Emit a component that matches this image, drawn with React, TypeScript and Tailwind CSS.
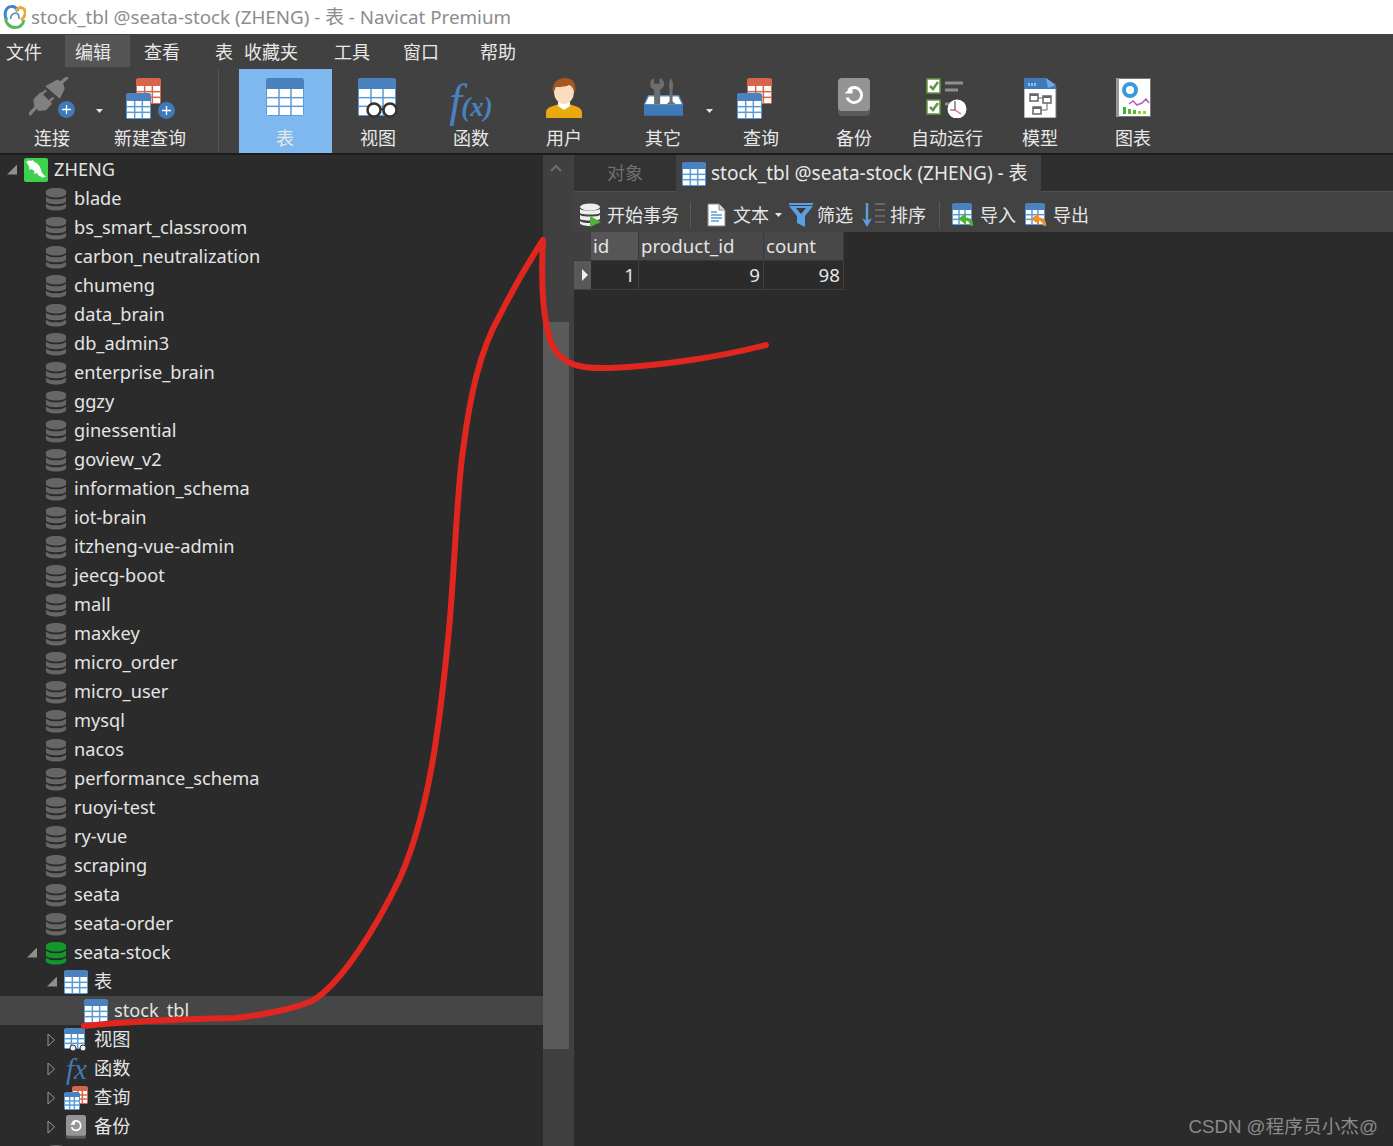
import React from 'react';

const uiFont = "font-['Noto_Sans','Noto_Sans_CJK_SC',sans-serif]";

function GridIcon({ w = 24, h = 24, head = '#4a82c0', line = '#5b9bd5', cols = 3, rows = 3 }: { w?: number; h?: number; head?: string; line?: string; cols?: number; rows?: number }) {
  const top = Math.round(h * 0.3);
  const cells = [];
  const cw = (w - 2) / cols;
  const ch = (h - top - 1) / rows;
  for (let c = 1; c < cols; c++) cells.push(<rect key={'c' + c} x={1 + c * cw - 0.75} y={top} width={1.5} height={h - top} fill={line} />);
  for (let r = 1; r < rows; r++) cells.push(<rect key={'r' + r} x={0} y={top + r * ch - 0.75} width={w} height={1.5} fill={line} />);
  return (
    <svg width={w} height={h} viewBox={`0 0 ${w} ${h}`}>
      <rect x={0.5} y={1} width={w - 1} height={h - 1.5} rx={1} fill="#fff" stroke={line} />
      {cells}
      <path d={`M0 ${top}V3a3 3 0 0 1 3-3H${w - 3}a3 3 0 0 1 3 3V${top}Z`} fill={head} />
    </svg>
  );
}

function DbIcon({ color = '#666666' }: { color?: string }) {
  return (
    <svg width={22} height={24} viewBox="0 0 24 24" preserveAspectRatio="none" className="ml-px">
      <path d="M1 4.500C1 2.500 6 1 12 1s11 1.500 11 3.500V7c0 2-5 3.500-11 3.500S1 9 1 7Z" fill={color} />
      <path d="M1 9.500c2 2 6 2.800 11 2.800s9-.8 11-2.800V14c0 2-5 3.300-11 3.300S1 16 1 14Z" fill={color} />
      <path d="M1 16.500c2 2 6 2.800 11 2.800s9-.8 11-2.800V20c0 2-5 3.500-11 3.500S1 22 1 20Z" fill={color} />
    </svg>
  );
}

function PlusBadge({ size = 17 }: { size?: number }) {
  return (
    <svg width={size} height={size} viewBox="0 0 17 17">
      <circle cx={8.5} cy={8.5} r={8.5} fill="#3f7ab8" />
      <path d="M8.500 4v9M4 8.500h9" stroke="#fff" strokeWidth={1.300} />
    </svg>
  );
}

function PlugIcon() {
  return (
    <span className="relative block w-[46px] h-[40px] -mt-px">
      <svg width={40} height={40} viewBox="30 20 120 120">
        <path d="M82 48L115 30L130 38L135 55L122 82Z" fill="#808080" stroke="#808080" strokeWidth={4} strokeLinejoin="round" />
        <path d="M128 36L143 23" stroke="#808080" strokeWidth={10} strokeLinecap="round" />
        <path d="M45 88L65 68L97 100L80 118L60 120L48 108Z" fill="#808080" stroke="#808080" strokeWidth={4} strokeLinejoin="round" />
        <path d="M66 72L82 60M88 95L104 82" stroke="#808080" strokeWidth={7} />
        <path d="M50 112L33 131" stroke="#808080" strokeWidth={10} strokeLinecap="round" />
      </svg>
      <span className="absolute right-0 bottom-[-1px]"><PlusBadge /></span>
    </span>
  );
}

function QueryIcon({ badge = false }: { badge?: boolean }) {
  return (
    <span className="relative block w-[48px] h-[41px]">
      <span className="absolute left-[10px] top-0"><GridIcon w={25} h={26} head="#d6654a" line="#d6654a" /></span>
      <span className="absolute left-0 top-[15px]"><GridIcon w={25} h={26} /></span>
      {badge && <span className="absolute right-[-1px] bottom-0"><PlusBadge /></span>}
    </span>
  );
}

function ViewIcon() {
  return (
    <span className="relative block w-[40px] h-[40px]">
      <GridIcon w={38} h={38} />
      <svg className="absolute left-[8px] top-[24px]" width={32} height={16} viewBox="0 0 32 16">
        <circle cx={8} cy={8} r={6.500} fill="#fff" stroke="#333" strokeWidth={2.500} />
        <circle cx={24} cy={8} r={6.500} fill="#fff" stroke="#333" strokeWidth={2.500} />
        <path d="M14 7h4" stroke="#333" strokeWidth={2} />
      </svg>
    </span>
  );
}

function FxIcon() {
  return (
    <span className="flex items-end h-[44px] font-['Liberation_Serif',serif] italic text-[#4a82c0] leading-none">
      <span className="text-[46px] leading-[42px]">f</span>
      <span className="text-[27px] leading-[30px] font-bold -ml-[1px]">(x)</span>
    </span>
  );
}

function UserIcon() {
  return (
    <svg width={38} height={40} viewBox="0 0 38 40">
      <path d="M1 40v-5c0-4 3-6 7-7l6-2h10l6 2c4 1 7 3 7 7v5Z" fill="#e9a90f" />
      <path d="M13 24h12v4l-6 4-6-4Z" fill="#fff" />
      <ellipse cx={19} cy={14} rx={10} ry={12} fill="#fbdcbf" />
      <path d="M8 15C6 5 13 0 20 0c8 0 12 6 10 15-1-4-3-7-6-8-4 2-11 2-13 2-1 2-2 4-3 6Z" fill="#a6561f" />
    </svg>
  );
}

function ToolsIcon() {
  return (
    <svg width={39} height={38} viewBox="42 25 116 113">
      <path d="M55 78H145L158 106H42Z" fill="#fff" stroke="#4f8fd0" strokeWidth={4} />
      <path d="M62 50C58 35 65 28 72 25V42H88V25C98 28 105 38 100 50C98 56 92 58 90 60V102H72V60C68 58 64 55 62 50Z" fill="#6d6d6d" />
      <path d="M122 25C116 35 115 45 118 60V95L110 102H136L127 95V60C130 45 128 35 122 25Z" fill="#6d6d6d" />
      <path d="M42 103H158V137H42Z" fill="#3f7ab8" />
    </svg>
  );
}

function BackupIcon({ size = 32 }: { size?: number }) {
  return (
    <svg width={size} height={size * 1.2} viewBox="0 0 32 38.400">
      <rect x={0} y={4} width={32} height={34} rx={4} fill="#5a5a5a" />
      <rect x={0} y={0} width={32} height={33} rx={4} fill="#949494" />
      <path d="M10.500 12a7.500 7.500 0 1 1-1.500 7.500" fill="none" stroke="#fff" strokeWidth={2.800} />
      <path d="M6.500 15.500h8v-7.500Z" fill="#fff" />
    </svg>
  );
}

function AutoRunIcon() {
  return (
    <svg width={42} height={40} viewBox="0 0 42 40">
      <rect x={1} y={1} width={13} height={14} fill="#fff" stroke="#5d9a3c" strokeWidth={1.500} />
      <path d="M4 8l3 3 5-7" fill="none" stroke="#5d9a3c" strokeWidth={2.500} />
      <rect x={1} y={22} width={13} height={14} fill="#fff" stroke="#5d9a3c" strokeWidth={1.500} />
      <path d="M4 29l3 3 5-7" fill="none" stroke="#5d9a3c" strokeWidth={2.500} />
      <path d="M19 5h18M19 12h13M19 26h4" stroke="#8f8f8f" strokeWidth={3} />
      <circle cx={31} cy={31} r={9.500} fill="#fff" />
      <path d="M29 23v9h-5" fill="none" stroke="#555" strokeWidth={1.200} />
      <path d="M29 32l6 4" stroke="#e8735a" strokeWidth={1.300} />
    </svg>
  );
}

function ModelIcon() {
  return (
    <svg width={33} height={40} viewBox="0 0 33 40">
      <path d="M0 1h22l10 8v31H0Z" fill="#fff" stroke="#777" />
      <path d="M0 0h22l10 9v2H0Z" fill="#3f7ab8" />
      <path d="M22 0l10 7-8 3Z" fill="#6aa9e6" />
      <path d="M5 5v3M8 5v3M11 5v3" stroke="#fff" />
      <path d="M6 16h8v7H6ZM19 18h8v7h-8ZM9 29h8v7H9Z" fill="#fff" stroke="#666" strokeWidth={1.500} />
      <path d="M6 16h8v2H6ZM19 18h8v2h-8ZM9 29h8v2H9Z" fill="#666" />
      <path d="M14 20h5M23 25v7h-6" fill="none" stroke="#666" />
    </svg>
  );
}

function ChartIcon() {
  return (
    <svg width={35} height={40} viewBox="0 0 35 40">
      <rect x={0.500} y={0.500} width={34} height={38} fill="#fff" stroke="#777" />
      <rect x={0} y={0} width={3} height={39} fill="#999" />
      <circle cx={14} cy={12} r={6} fill="none" stroke="#3a9bd8" strokeWidth={4} />
      <path d="M13 26l4-3 4 4 5-2 4-4 3 4" fill="none" stroke="#b65bc7" strokeWidth={1.500} />
      <path d="M7 29h3v7H7Z" fill="#3cae3e" />
      <path d="M12 31h3v5h-3ZM17 32h3v4h-3Z" fill="#56b83a" />
      <path d="M22 33h3v3h-3ZM27 33h3v3h-3Z" fill="#8ed62e" />
    </svg>
  );
}

function LogoIcon() {
  return (
    <svg width={23} height={24} viewBox="0 0 23 24">
      <path d="M4 15C0 9 3 2 8 1.500c4-.5 6 2 6.500 5" fill="none" stroke="#3f87c9" strokeWidth={3} />
      <path d="M13 6c3-5 8-4 9 0 1 3-1 7-4 9" fill="none" stroke="#e9a93a" strokeWidth={3} />
      <path d="M2.500 13c0 5 4 9.500 9.500 9.500s8-3 9-7.500" fill="none" stroke="#5cb85c" strokeWidth={3} />
      <path d="M7.500 14c0-4 3-6 5-6s4 2 3.500 6" fill="none" stroke="#3f87c9" strokeWidth={1.500} />
    </svg>
  );
}

function Dolphin() {
  return (
    <svg width={24} height={24} viewBox="0 0 24 24">
      <rect width={24} height={24} rx={2} fill="#3fd14e" />
      <path d="M2 4c2-1 3-2 5-1l2-1 1 2c4 1 6 4 7 8 .500 2 1 3 2 4l3 3c-2 0-3 0-4 1 0-1-1-2-3-2l-2-3-3 1 .500-3-3-2-2 1c0-3-1-6-3.500-8Z" fill="#fff" />
    </svg>
  );
}

function MainBtn({ label, icon, active }: { label: string; icon: React.ReactNode; active?: boolean }) {
  return (
    <div className={`w-[93px] h-[84px] shrink-0 pr-px flex flex-col items-center ${active ? 'bg-[#7fb8ee]' : ''}`}>
      <div className="h-[50px] pt-[9px] flex items-start justify-center">{icon}</div>
      <div className="text-[18px] leading-[24px] mt-[7px] text-[#e8e8e8]">{label}</div>
    </div>
  );
}

const Caret = ({ className = '' }: { className?: string }) => <span className={`block w-[7px] h-[4px] shrink-0 bg-[#e6e6e6] [clip-path:polygon(0_0,100%_0,50%_100%)] ${className}`} />;

const dbNames = ['blade', 'bs_smart_classroom', 'carbon_neutralization', 'chumeng', 'data_brain', 'db_admin3', 'enterprise_brain', 'ggzy', 'ginessential', 'goview_v2', 'information_schema', 'iot-brain', 'itzheng-vue-admin', 'jeecg-boot', 'mall', 'maxkey', 'micro_order', 'micro_user', 'mysql', 'nacos', 'performance_schema', 'ruoyi-test', 'ry-vue', 'scraping', 'seata', 'seata-order'];

function Arrow({ kind }: { kind?: 'open' | 'closed' }) {
  if (kind === 'open') return <span className="block w-[10px] h-[10px] bg-[#8f8f8f] [clip-path:polygon(100%_0,100%_100%,0_100%)]" />;
  if (kind === 'closed')
    return (
      <svg width={9} height={14} viewBox="0 0 9 14">
        <path d="M1 1l6.500 6L1 13Z" fill="none" stroke="#9a9a9a" />
      </svg>
    );
  return null;
}

function TreeRow({ pad, arrow, icon, label, selected }: { pad: string; arrow?: 'open' | 'closed'; icon: React.ReactNode; label: string; selected?: boolean }) {
  return (
    <div className={`h-[29px] shrink-0 flex items-center ${pad} ${selected ? 'bg-[#464646]' : ''}`}>
      <span className="w-[17px] shrink-0 flex"><Arrow kind={arrow} /></span>
      <span className="w-[30px] shrink-0 flex items-center">{icon}</span>
      <span className="text-[18.2px] leading-[29px] text-[#e4e4e4] whitespace-nowrap">{label}</span>
    </div>
  );
}

function SubBtn({ icon, label, className = '' }: { icon: React.ReactNode; label: string; className?: string }) {
  return (
    <div className={`flex items-center shrink-0 ${className}`}>
      {icon}
      <span className="text-[18px] text-[#e6e6e6] leading-[24px]">{label}</span>
    </div>
  );
}

function TxIcon() {
  return (
    <svg width={23} height={24} viewBox="0 0 23 24" className="mr-[5px]">
      <ellipse cx={11} cy={4} rx={10} ry={3.500} fill="#eee" />
      <path d="M1 6c2 2 18 2 20 0v4c-2 2-18 2-20 0ZM1 12c2 2 18 2 20 0v4c-2 2-18 2-20 0Z" fill="#eee" />
      <path d="M1 18c2 2 8 2 10 2v3c-5 0-10-1-10-3Z" fill="#eee" />
      <path d="M11 13l11 6-11 5Z" fill="#4fb03a" />
    </svg>
  );
}

function DocIcon() {
  return (
    <svg width={19} height={24} viewBox="0 0 19 24">
      <path d="M1 1h11l6 6v16H1Z" fill="#fff" stroke="#888" />
      <path d="M12 1v6h6" fill="#ddd" stroke="#888" />
      <path d="M4 9h6M4 12h11M4 15h11M4 18h8" stroke="#5b9bd5" strokeWidth={1.300} />
    </svg>
  );
}

function FilterIcon() {
  return (
    <svg width={24} height={24} viewBox="0 0 24 24">
      <path d="M0 0h24v2H0Z" fill="#5b9fe0" />
      <path d="M0 3h24l-8 10v11l-8-4v-7Z" fill="#5b9fe0" />
      <path d="M7 5h10l-5 6Z" fill="#3b3b3b" />
    </svg>
  );
}

function SortIcon() {
  return (
    <svg width={25} height={26} viewBox="0 0 25 26">
      <path d="M5 1v20" stroke="#5b9fe0" strokeWidth={2.500} />
      <path d="M0 16l5 9 5-9-5 3Z" fill="#5b9fe0" />
      <path d="M13 2h10M13 8h10M13 14h10M13 20h10" stroke="#8a8a8a" strokeWidth={1.200} />
    </svg>
  );
}

function TransferIcon({ color }: { color: string }) {
  return (
    <span className="relative block w-[22px] h-[24px]">
      <GridIcon w={20} h={22} />
      <svg className="absolute right-0 bottom-0" width={16} height={14} viewBox="0 0 14 12">
        <path d="M12 11c0-4-2-6-7-6" fill="none" stroke={color} strokeWidth={3} />
        <path d="M7 0L0 5l7 5Z" fill={color} />
      </svg>
    </span>
  );
}

const Sep = ({ className = '' }: { className?: string }) => <span className={`block w-px h-[26px] bg-[#5a5a5a] shrink-0 ${className}`} />;

const menuText = 'h-[33px] leading-[36px]';

export default function App() {
  return (
    <div className={`relative w-[1393px] h-[1146px] overflow-hidden flex flex-col bg-[#2b2b2b] ${uiFont}`}>
      <div className="h-[34px] shrink-0 bg-white flex items-center pl-[3px]">
        <LogoIcon />
        <span className="ml-[5px] text-[18.8px] text-[#8c8c8c] whitespace-nowrap">stock_tbl @seata-stock (ZHENG) - 表 - Navicat Premium</span>
      </div>

      <div className="h-[33px] shrink-0 bg-[#414141] flex items-start text-[18px] text-[#e8e8e8]">
        <span className={`ml-[6px] ${menuText}`}>文件</span>
        <span className="ml-[23px] mt-px w-[65px] h-[32px] pl-[10px] leading-[34px] bg-[#555555]">编辑</span>
        <span className={`ml-[14px] ${menuText}`}>查看</span>
        <span className={`ml-[35px] ${menuText}`}>表</span>
        <span className={`ml-[11px] ${menuText}`}>收藏夹</span>
        <span className={`ml-[36px] ${menuText}`}>工具</span>
        <span className={`ml-[33px] ${menuText}`}>窗口</span>
        <span className={`ml-[41px] ${menuText}`}>帮助</span>
      </div>

      <div className="h-[86px] shrink-0 bg-[#414141] flex pt-[2px]">
        <div className="ml-[6px]"><MainBtn label="连接" icon={<PlugIcon />} /></div>
        <div className="w-[5px] pt-[40px] flex shrink-0"><Caret className="-ml-[3px]" /></div>
        <MainBtn label="新建查询" icon={<QueryIcon badge />} />
        <div className="ml-[21px] mr-[20px] w-px h-[82px] bg-[#555555] shrink-0" />
        <MainBtn active label="表" icon={<GridIcon w={38} h={38} />} />
        <MainBtn label="视图" icon={<ViewIcon />} />
        <MainBtn label="函数" icon={<FxIcon />} />
        <MainBtn label="用户" icon={<UserIcon />} />
        <div className="ml-[6px]"><MainBtn label="其它" icon={<ToolsIcon />} /></div>
        <div className="w-[5px] pt-[40px] flex shrink-0"><Caret className="-ml-[4px]" /></div>
        <MainBtn label="查询" icon={<QueryIcon />} />
        <MainBtn label="备份" icon={<BackupIcon />} />
        <MainBtn label="自动运行" icon={<AutoRunIcon />} />
        <MainBtn label="模型" icon={<ModelIcon />} />
        <MainBtn label="图表" icon={<ChartIcon />} />
      </div>

      <div className="h-[2px] shrink-0 bg-[#1c1c1c]" />

      <div className="flex-1 min-h-0 flex">
        <div className="w-[543px] shrink-0 flex flex-col overflow-hidden">
          <TreeRow pad="pl-[7px]" arrow="open" icon={<Dolphin />} label="ZHENG" />
          {dbNames.map((name) => (
            <TreeRow key={name} pad="pl-[27px]" icon={<DbIcon />} label={name} />
          ))}
          <TreeRow pad="pl-[27px]" arrow="open" icon={<DbIcon color="#12982b" />} label="seata-stock" />
          <TreeRow pad="pl-[47px]" arrow="open" icon={<GridIcon w={24} h={24} />} label="表" />
          <TreeRow selected pad="pl-[67px]" icon={<GridIcon w={24} h={24} />} label="stock_tbl" />
          <TreeRow
            pad="pl-[47px]"
            arrow="closed"
            label="视图"
            icon={
              <span className="relative block w-[24px] h-[24px]">
                <GridIcon w={21} h={21} />
                <svg className="absolute left-[5px] bottom-0" width={18} height={8} viewBox="0 0 18 8">
                  <circle cx={4} cy={4} r={3} fill="#eee" stroke="#333" />
                  <circle cx={14} cy={4} r={3} fill="#eee" stroke="#333" />
                </svg>
              </span>
            }
          />
          <TreeRow pad="pl-[47px]" arrow="closed" label="函数" icon={<span className="ml-[2px] font-['Liberation_Serif',serif] italic text-[29px] leading-[24px] text-[#3f7ab8]">fx</span>} />
          <TreeRow
            pad="pl-[47px]"
            arrow="closed"
            label="查询"
            icon={
              <span className="relative block w-[24px] h-[24px]">
                <span className="absolute left-[8px] top-0"><GridIcon w={16} h={18} head="#d6654a" line="#d6654a" /></span>
                <span className="absolute left-0 top-[6px]"><GridIcon w={16} h={18} /></span>
              </span>
            }
          />
          <TreeRow pad="pl-[47px]" arrow="closed" label="备份" icon={<span className="ml-[2px] flex"><BackupIcon size={20} /></span>} />
          <TreeRow pad="pl-[27px]" icon={<DbIcon />} label="" />
        </div>

        <div className="w-[31px] shrink-0 bg-[#404040] flex flex-col">
          <div className="h-[167px] w-[26px] shrink-0 flex justify-center pt-[9px]">
            <svg width={12} height={8} viewBox="0 0 12 8">
              <path d="M1 7l5-5 5 5" fill="none" stroke="#6f6f6f" strokeWidth={2} />
            </svg>
          </div>
          <div className="w-[26px] h-[727px] shrink-0 bg-[#5a5a5a]" />
        </div>

        <div className="flex-1 min-w-0 flex flex-col">
          <div className="h-[37px] shrink-0 flex bg-[#2e2e2e]">
            <div className="w-[102px] shrink-0 bg-[#333333] border-b border-[#505050] pl-[33px] flex items-center text-[18px] text-[#6f6f6f]">对象</div>
            <div className="w-[365px] shrink-0 bg-[#424242] flex items-center pl-[6px]">
              <GridIcon w={24} h={24} />
              <span className="ml-[5px] text-[19px] text-[#e8e8e8] whitespace-nowrap">stock_tbl @seata-stock (ZHENG) - 表</span>
            </div>
            <div className="flex-1 border-b border-[#505050]" />
          </div>

          <div className="h-[40px] shrink-0 bg-[#424242] flex items-center pt-[6px]">
            <SubBtn className="ml-[5px]" icon={<TxIcon />} label="开始事务" />
            <Sep className="ml-[11px]" />
            <SubBtn className="ml-[16px]" icon={<span className="mr-[7px] flex"><DocIcon /></span>} label="文本" />
            <span className="ml-[6px]"><Caret /></span>
            <SubBtn className="ml-[7px]" icon={<span className="mr-[4px] flex"><FilterIcon /></span>} label="筛选" />
            <SubBtn className="ml-[9px]" icon={<span className="mr-[3px] flex"><SortIcon /></span>} label="排序" />
            <Sep className="ml-[13px]" />
            <SubBtn className="ml-[12px]" icon={<span className="mr-[6px] flex"><TransferIcon color="#4fb03a" /></span>} label="导入" />
            <SubBtn className="ml-[9px]" icon={<span className="mr-[6px] flex"><TransferIcon color="#f0902a" /></span>} label="导出" />
          </div>

          <div className="flex flex-col text-[18.7px] text-[#e4e4e4] w-[270px]">
            <div className="flex h-[29px] bg-[#484848] border-b border-[#383838]">
              <div className="w-[17px] shrink-0 bg-[#404040]" />
              <div className="w-[48px] shrink-0 pl-[2px] bg-[#565656] border-r border-[#3a3a3a] leading-[28px]">id</div>
              <div className="w-[125px] shrink-0 pl-[2px] border-r border-[#3a3a3a] leading-[28px]">product_id</div>
              <div className="w-[80px] shrink-0 pl-[2px] border-r border-[#3a3a3a] leading-[28px]">count</div>
            </div>
            <div className="flex h-[29px] border-b border-[#404040]">
              <div className="w-[17px] shrink-0 bg-[#585858] flex items-center pl-[8px]">
                <span className="block w-[6px] h-[12px] bg-[#eeeeee] [clip-path:polygon(0_0,100%_50%,0_100%)]" />
              </div>
              <div className="w-[48px] shrink-0 pr-[3px] text-right border-r border-[#404040] leading-[28px]">1</div>
              <div className="w-[125px] shrink-0 pr-[3px] text-right border-r border-[#404040] leading-[28px]">9</div>
              <div className="w-[80px] shrink-0 pr-[3px] text-right border-r border-[#404040] leading-[28px]">98</div>
            </div>
          </div>
        </div>
      </div>

      <svg className="absolute inset-0 pointer-events-none" width={1393} height={1146} viewBox="0 0 1393 1146">
        <path
          d="M84 1026C130 1021 190 1019 235 1018C265 1015 295 1008 312 1001C340 985 375 930 400 878C430 810 440 720 448 640C455 570 456 500 463 450C470 395 480 350 500 315C515 285 530 260 543 240C541 280 542 320 552 345C562 365 580 369 610 368C660 366 720 357 766 345"
          fill="none"
          stroke="#e1261f"
          strokeWidth={6}
          strokeLinecap="round"
          strokeLinejoin="round"
        />
      </svg>

      <span className="absolute right-[15px] bottom-[7px] text-[18.7px] leading-[24px] text-[#8a8a8a] font-['Liberation_Sans','Noto_Sans_CJK_SC',sans-serif]">CSDN @程序员小杰@</span>
    </div>
  );
}
